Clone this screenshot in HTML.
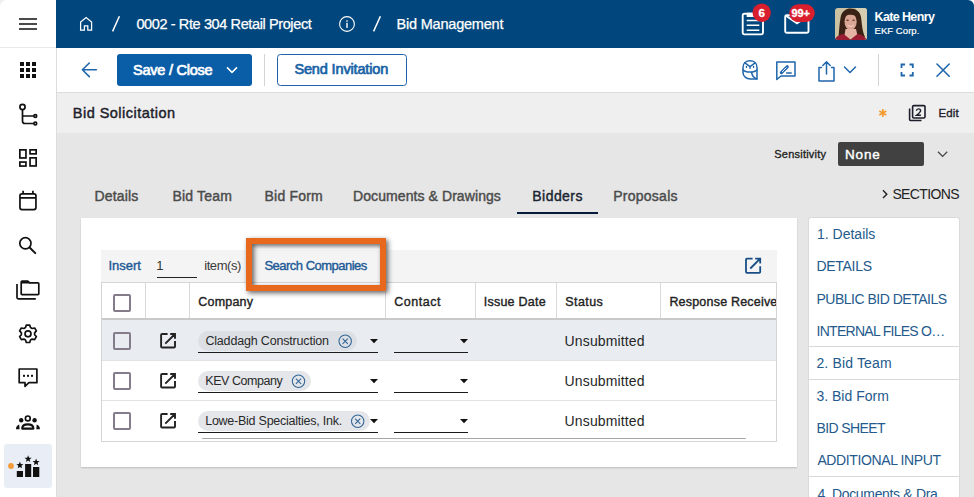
<!DOCTYPE html>
<html><head><meta charset="utf-8">
<style>
*{box-sizing:border-box;margin:0;padding:0}
html,body{width:974px;height:497px;overflow:hidden;background:#fff}
body{position:relative;font-family:"Liberation Sans",sans-serif;color:#222}
.a{position:absolute}
.t{position:absolute;white-space:nowrap;line-height:1}
svg{position:absolute;left:0;top:0;overflow:visible}
</style></head><body>
<!-- base panels -->
<div class="a" style="left:0;top:0;width:10px;height:10px;background:#efefef"></div>
<div class="a" style="left:0;top:0;width:56px;height:497px;background:#fff;border-top-left-radius:7px"></div>
<div class="a" style="left:56px;top:48px;width:1px;height:449px;background:#dcdcdc"></div>
<div class="a" style="left:0;top:47px;width:56px;height:1px;background:#e8e8e8"></div>
<div class="a" style="left:56px;top:0;width:918px;height:48px;background:#01467c;border-top-right-radius:6px"></div>
<div class="a" style="left:57px;top:48px;width:917px;height:44px;background:#fff"></div>
<div class="a" style="left:57px;top:92px;width:917px;height:1px;background:#dcdcdc"></div>
<div class="a" style="left:57px;top:93px;width:917px;height:40px;background:#efefef"></div>
<div class="a" style="left:57px;top:133px;width:917px;height:364px;background:#e6e6e6"></div>

<!-- hamburger -->
<div class="a" style="left:19px;top:18px;width:18px;height:2px;background:#4a4a4a"></div>
<div class="a" style="left:19px;top:23px;width:18px;height:2px;background:#4a4a4a"></div>
<div class="a" style="left:19px;top:28px;width:18px;height:2px;background:#4a4a4a"></div>

<!-- sidebar icons -->
<svg width="974" height="497" viewBox="0 0 974 497">
 <g fill="#111">
  <rect x="20" y="62" width="4" height="4"/><rect x="26" y="62" width="4" height="4"/><rect x="32" y="62" width="4" height="4"/>
  <rect x="20" y="68" width="4" height="4"/><rect x="26" y="68" width="4" height="4"/><rect x="32" y="68" width="4" height="4"/>
  <rect x="20" y="74" width="4" height="4"/><rect x="26" y="74" width="4" height="4"/><rect x="32" y="74" width="4" height="4"/>
 </g>
 <g fill="none" stroke="#111" stroke-width="1.7">
  <!-- flow -->
  <circle cx="22.5" cy="107" r="2.6"/>
  <path d="M22.5 109.6 V121 Q22.5 123.5 25 123.5 H33.8 M22.5 116 H33.8"/>
  <circle cx="35.3" cy="116" r="1.4"/>
  <circle cx="35.3" cy="123.5" r="1.4"/>
  <!-- dashboard -->
  <rect x="19.85" y="149.85" width="6.1" height="8.1"/>
  <rect x="30.05" y="149.85" width="6.1" height="4"/>
  <rect x="19.85" y="162.05" width="6.1" height="4"/>
  <rect x="30.05" y="157.85" width="6.1" height="8.1"/>
  <!-- calendar -->
  <rect x="19.95" y="193.85" width="16" height="15.7" rx="2"/>
  <path d="M20 197.9 H36 M23.1 190.8 V193.5 M32.9 190.8 V193.5"/>
  <!-- search -->
  <circle cx="25.4" cy="243.3" r="5.6"/>
  <path d="M29.6 247.5 L35.3 253.1" stroke-width="2" stroke-linecap="round"/>
  <!-- folders -->
  <path d="M17 284 V297.5 Q17 298.8 18.3 298.8 H35.8"/>
  <path d="M21.2 293.8 V281.9 Q21.2 281 22.1 281 H27.8 L29.6 282.9 H37.9 Q38.8 282.9 38.8 283.8 V293.8 Q38.8 294.7 37.9 294.7 H22.1 Q21.2 294.7 21.2 293.8 Z" stroke-linejoin="round"/>
  <!-- chat -->
  <path d="M19.2 369 H36.9 V382.7 H28.9 L25 386.3 V382.7 H19.2 Z" stroke-linejoin="round"/>
 </g>
 <path d="M21 281 H27.8 L29.8 283.6 H21 Z" fill="#111"/>
 <g fill="#111"><rect x="23" y="374.8" width="2" height="2"/><rect x="27" y="374.8" width="2" height="2"/><rect x="31" y="374.8" width="2" height="2"/></g>
 <!-- gear -->
 <path fill="none" stroke="#111" stroke-width="1.7" stroke-linejoin="round" d="M30.51 327.59 L29.69 325.11 L26.31 325.11 L25.49 327.59 L23.88 328.52 L21.32 327.99 L19.63 330.92 L21.37 332.87 L21.37 334.73 L19.63 336.68 L21.32 339.61 L23.88 339.08 L25.49 340.01 L26.31 342.49 L29.69 342.49 L30.51 340.01 L32.12 339.08 L34.68 339.61 L36.37 336.68 L34.63 334.73 L34.63 332.87 L36.37 330.92 L34.68 327.99 L32.12 328.52 Z"/>
 <circle cx="28" cy="333.8" r="3" fill="none" stroke="#111" stroke-width="1.7"/>
 <!-- people -->
 <circle cx="27.8" cy="418.4" r="2.4" fill="none" stroke="#111" stroke-width="1.7"/>
 <circle cx="21.2" cy="420.2" r="2.2" fill="#111"/>
 <circle cx="34.6" cy="420.2" r="2.2" fill="#111"/>
 <path d="M22.2 428.6 Q22.2 424.4 27.8 424.4 Q33.4 424.4 33.4 428.6 Z" fill="none" stroke="#111" stroke-width="2.1" stroke-linejoin="round"/>
 <path d="M16 429.2 Q16 425.5 19.2 424.5 L19.6 429.2 Z" fill="#111"/>
 <path d="M39.9 429.2 Q39.9 425.5 36.7 424.5 L36.3 429.2 Z" fill="#111"/>
 <!-- active item -->
 <rect x="4" y="444" width="48" height="44" rx="3" fill="#e9eef6"/>
 <circle cx="11" cy="466" r="2.9" fill="#f39a3a"/>
 <g fill="#111">
  <rect x="16.8" y="471" width="6.2" height="6"/>
  <rect x="25.1" y="464" width="6.1" height="13"/>
  <rect x="33" y="467" width="6.3" height="10"/>
  <path d="M19.90 461.60 L20.84 464.01 L23.42 464.16 L21.42 465.79 L22.07 468.29 L19.90 466.90 L17.73 468.29 L18.38 465.79 L16.38 464.16 L18.96 464.01 Z"/>
  <path d="M28.10 455.30 L29.04 457.71 L31.62 457.86 L29.62 459.49 L30.27 461.99 L28.10 460.60 L25.93 461.99 L26.58 459.49 L24.58 457.86 L27.16 457.71 Z"/>
  <path d="M36.10 458.50 L37.04 460.91 L39.62 461.06 L37.62 462.69 L38.27 465.19 L36.10 463.80 L33.93 465.19 L34.58 462.69 L32.58 461.06 L35.16 460.91 Z"/>
 </g>
</svg>

<!-- header -->
<svg width="974" height="497">
 <path d="M80.6 30.2 V22 L86.1 17.6 L91.6 22 V30.2 H87.8 V25.8 H84.4 V30.2 Z" fill="none" stroke="#fff" stroke-width="1.25" stroke-linejoin="miter"/>
 <path d="M119.4 16.2 L112.6 31.4" stroke="#fff" stroke-width="1.5"/>
 <circle cx="347" cy="24" r="7.4" fill="none" stroke="#fff" stroke-width="1.1"/>
 <rect x="346.1" y="20.3" width="1.8" height="1.4" fill="#c9d6e2"/>
 <rect x="346.1" y="22.8" width="1.8" height="5.1" fill="#c9d6e2"/>
 <path d="M380.4 16.2 L373.6 31.4" stroke="#fff" stroke-width="1.5"/>
 <!-- clipboard -->
 <rect x="742.7" y="13.7" width="20.3" height="20.7" rx="1.8" fill="none" stroke="#fff" stroke-width="1.9"/>
 <path d="M746.7 12.7 H759.3 V17 H746.7 Z" fill="#fff"/>
 <path d="M746.7 20.4 H759.3 M746.7 25.3 H759.3 M746.7 30.3 H759.3" stroke="#fff" stroke-width="1.5"/>
 <circle cx="761.7" cy="12.8" r="9.2" fill="#d91e2e"/>
 <!-- envelope -->
 <rect x="785.2" y="15.2" width="23.3" height="17.6" rx="1.5" fill="none" stroke="#fff" stroke-width="1.9"/>
 <path d="M786 15.8 L797 23.3 L808 15.8" fill="none" stroke="#fff" stroke-width="1.9"/>
 <rect x="789.2" y="4.3" width="25.6" height="17.6" rx="8.8" fill="#d91e2e"/>
 <!-- avatar -->
 <defs><clipPath id="av"><rect x="835" y="8" width="32" height="32" rx="3"/></clipPath></defs>
 <filter id="bl" x="-20%" y="-20%" width="140%" height="140%"><feGaussianBlur stdDeviation="0.55"/></filter>
 <g clip-path="url(#av)">
  <rect x="835" y="8" width="32" height="32" fill="#cbc2a2"/>
  <rect x="856" y="8" width="11" height="32" fill="#d6ceb0"/>
  <g filter="url(#bl)">
  <path d="M838.5 38 C839 31 839.5 24 840.5 18 C841.5 11 846 8.5 850.5 8.5 C856 8.5 860 11.5 861 17 C862 24 862 30 865 37 L858 38 Z" fill="#3a2417"/>
  <ellipse cx="850.6" cy="21.8" rx="6.1" ry="8.4" fill="#dba593"/>
  <path d="M843.8 16.5 C845 11.5 849 10.8 852 11.2 C855.5 11.8 857.5 14 857.8 18 C855.5 15 850 13.5 843.8 16.5 Z" fill="#3a2417"/>
  <ellipse cx="847.6" cy="20.3" rx="1.3" ry="0.8" fill="#5a3a30"/>
  <ellipse cx="853.6" cy="20.3" rx="1.3" ry="0.8" fill="#5a3a30"/>
  <path d="M847.5 25.4 Q850.6 27.6 853.7 25.4" fill="none" stroke="#f2d8d0" stroke-width="1"/>
  <path d="M845.5 29 L856 29 L858 38 L844 38 Z" fill="#e4b3a3"/>
  <path d="M834 42 C835 37 839 34.5 843.5 34 L850.5 39.5 L857.5 34 C862 34.5 866 37 868 42 Z" fill="#9a1d30"/>
  </g>
 </g>
</svg>
<div class="t" style="left:136.40px;top:17.00px;font-size:14.5px;color:#fff;letter-spacing:-0.386px;-webkit-text-stroke:0.25px #fff;">0002 - Rte 304 Retail Project</div>
<div class="t" style="left:396.60px;top:17.00px;font-size:14.5px;color:#fff;letter-spacing:-0.215px;-webkit-text-stroke:0.25px #fff;">Bid Management</div>
<div class="t" style="left:874.50px;top:11.00px;font-size:12.5px;color:#fff;font-weight:bold;letter-spacing:-0.622px;">Kate Henry</div>
<div class="t" style="left:874.50px;top:26.00px;font-size:9.5px;color:#fff;letter-spacing:0.062px;-webkit-text-stroke:0.2px #fff;">EKF Corp.</div>
<div class="t" style="left:757.2px;top:8.4px;width:9px;text-align:center;font-size:11.5px;font-weight:bold;color:#fff;-webkit-text-stroke:0.3px #fff">6</div>
<div class="t" style="left:791.6px;top:8.2px;font-size:11px;font-weight:bold;color:#fff;letter-spacing:-0.2px;-webkit-text-stroke:0.3px #fff">99+</div>

<!-- toolbar -->
<div class="a" style="left:117px;top:54px;width:135px;height:32px;background:#0a5ea8;border-radius:3px"></div>
<div class="a" style="left:264px;top:54px;width:1px;height:32px;background:#d4d4d4"></div>
<div class="a" style="left:277px;top:54px;width:130px;height:32px;border:1.5px solid #1f64a8;border-radius:3.5px"></div>
<div class="a" style="left:878px;top:54px;width:1px;height:32px;background:#d4d4d4"></div>
<svg width="974" height="497">
 <g fill="none" stroke="#1f66ad" stroke-width="1.6" stroke-linecap="round" stroke-linejoin="round">
  <path d="M96.4 69.8 H82.4 M89.3 63 L82.4 69.8 L89.3 76.6"/>
 </g>
 <path d="M227 67.4 L232 72.4 L237 67.4" fill="none" stroke="#fff" stroke-width="1.5"/>
 <g fill="none" stroke="#1f66ad" stroke-width="1.5" stroke-linejoin="round" stroke-linecap="round">
  <!-- owl -->
  <path d="M743 71 V67.5 C743 63.2 746 60.8 750 60.8 C754 60.8 757 63.2 757 67.5 V78.9 H750.5 C746.2 78.9 743 76.3 743 72.5 Z"/>
  <path d="M744.9 62.9 L750 66.6 L755.1 62.9 M750 66.6 V68.2"/>
  <path d="M743.2 70 C745.5 72.8 754.5 72.8 756.8 70"/>
  <path d="M751.6 72.4 C752 75.5 753.8 77.8 756.8 78.9"/>
 </g>
 <g fill="#1f66ad"><rect x="745.8" y="65.9" width="1.3" height="2.1"/><rect x="752.9" y="65.9" width="1.3" height="2.1"/></g>
 <g fill="none" stroke="#1f66ad" stroke-width="1.5" stroke-linejoin="round" stroke-linecap="round">
  <!-- sign chat -->
  <path d="M776.8 62 H795 V76 H781 L776.8 79.5 Z"/>
  <path d="M781.4 72.6 L787.2 66.8" stroke-width="3.2" stroke-linecap="round"/>
  <path d="M782.3 71.7 L786.3 67.7" stroke="#fff" stroke-width="1" stroke-linecap="round"/>
  <path d="M786.6 72.9 H791.2" stroke-width="1.5"/>
  <!-- share -->
  <path d="M821.5 67.5 H819 V81 H834 V67.5 H831.5 M826.5 74 V62 M822.8 65.5 L826.5 61.8 L830.2 65.5"/>
  <path d="M844.5 67 L850 72.5 L855.5 67"/>
  <!-- expand -->
  <path d="M901.5 68 V64.5 H905 M909.5 64.5 H912.8 V68 M912.8 72 V75.5 H909.5 M905 75.5 H901.5 V72" stroke-width="1.8" stroke-linecap="butt" stroke-linejoin="miter"/>
  <!-- close -->
  <path d="M937 64 L949.2 76.2 M949.2 64 L937 76.2" stroke-width="1.6"/>
 </g>
</svg>
<div class="t" style="left:133.00px;top:63.00px;font-size:14.5px;color:#fff;-webkit-text-stroke:0.7px #fff;letter-spacing:-0.236px;">Save / Close</div>
<div class="t" style="left:294.40px;top:62.00px;font-size:14.5px;color:#1a63a6;-webkit-text-stroke:0.7px #1a63a6;letter-spacing:-0.143px;">Send Invitation</div>

<!-- title bar -->
<div class="t" style="left:72.80px;top:106.00px;font-size:14.5px;color:#1d1d2b;-webkit-text-stroke:0.435px #1d1d2b;letter-spacing:0.473px;">Bid Solicitation</div>
<svg width="974" height="497">
 <path d="M882.8 109 V117 M879.3 111 L886.3 115 M886.3 111 L879.3 115" stroke="#f29a2b" stroke-width="1.6"/>
 <rect x="912.6" y="105.6" width="12.4" height="12.4" rx="1.2" fill="none" stroke="#1d1d2b" stroke-width="1.6"/>
 <path d="M909.6 108.5 V119.5 Q909.6 120.5 910.6 120.5 H921.5" fill="none" stroke="#1d1d2b" stroke-width="1.6"/>
 <path d="M916.4 110.8 Q916.6 108.9 918.6 108.9 Q920.6 108.9 920.6 110.7 Q920.6 112 916.5 115.3 H920.9" fill="none" stroke="#1d1d2b" stroke-width="1.4"/>
</svg>
<div class="t" style="left:938.60px;top:108.00px;font-size:11.5px;color:#1d1d2b;-webkit-text-stroke:0.345px #1d1d2b;letter-spacing:0.067px;">Edit</div>

<!-- sensitivity -->
<div class="t" style="left:774.30px;top:149.00px;font-size:11px;color:#222;-webkit-text-stroke:0.330px #222;letter-spacing:0.220px;">Sensitivity</div>
<div class="a" style="left:838px;top:142px;width:86px;height:24px;background:#414141;border-radius:2px"></div>
<div class="t" style="left:845.00px;top:148.00px;font-size:13.5px;color:#fff;-webkit-text-stroke:0.405px #fff;letter-spacing:0.867px;">None</div>
<svg width="974" height="497">
 <path d="M938 151.8 L942.6 156.4 L947.2 151.8" fill="none" stroke="#444" stroke-width="1.3"/>
</svg>

<!-- tabs -->
<div class="t" style="left:94.50px;top:189.00px;font-size:14px;color:#4b4b4b;-webkit-text-stroke:0.420px #4b4b4b;letter-spacing:0.150px;">Details</div>
<div class="t" style="left:172.40px;top:189.00px;font-size:14px;color:#4b4b4b;-webkit-text-stroke:0.420px #4b4b4b;letter-spacing:0.200px;">Bid Team</div>
<div class="t" style="left:264.50px;top:189.00px;font-size:14px;color:#4b4b4b;-webkit-text-stroke:0.420px #4b4b4b;letter-spacing:0.214px;">Bid Form</div>
<div class="t" style="left:353.00px;top:189.00px;font-size:14px;color:#4b4b4b;-webkit-text-stroke:0.420px #4b4b4b;letter-spacing:0.084px;">Documents &amp; Drawings</div>
<div class="t" style="left:532.30px;top:189.00px;font-size:14px;color:#1b2433;-webkit-text-stroke:0.420px #1b2433;letter-spacing:0.450px;">Bidders</div>
<div class="a" style="left:517px;top:211.8px;width:81px;height:2.3px;background:#061b3b"></div>
<div class="t" style="left:613.20px;top:189.00px;font-size:14px;color:#4b4b4b;-webkit-text-stroke:0.420px #4b4b4b;letter-spacing:0.262px;">Proposals</div>
<svg width="974" height="497">
 <path d="M883 190.3 L886.8 194.2 L883 198" fill="none" stroke="#222" stroke-width="1.4"/>
</svg>
<div class="t" style="left:892.40px;top:187.00px;font-size:14px;color:#222;letter-spacing:-0.614px;">SECTIONS</div>

<!-- card -->
<div class="a" style="left:81px;top:218px;width:716px;height:249px;background:#fff;box-shadow:0 1px 1.5px rgba(0,0,0,.18)"></div>
<!-- grid -->
<div class="a" style="left:101px;top:250px;width:676px;height:32px;background:#f4f4f4"></div>
<div class="a" style="left:101px;top:282px;width:676px;height:160px;border:1px solid #d5d5d5;background:#fff"></div>
<div class="a" style="left:102px;top:318px;width:674px;height:2px;background:#c9c9c9"></div>
<div class="a" style="left:102px;top:320px;width:674px;height:40px;background:#e9edf2"></div>
<div class="a" style="left:102px;top:360px;width:674px;height:1px;background:#e3e3e3"></div>
<div class="a" style="left:102px;top:400px;width:674px;height:1px;background:#e3e3e3"></div>
<div class="a" style="left:145px;top:283px;width:1px;height:35px;background:#d9d9d9"></div>
<div class="a" style="left:189px;top:283px;width:1px;height:35px;background:#d9d9d9"></div>
<div class="a" style="left:385px;top:283px;width:1px;height:35px;background:#d9d9d9"></div>
<div class="a" style="left:475px;top:283px;width:1px;height:35px;background:#d9d9d9"></div>
<div class="a" style="left:556px;top:283px;width:1px;height:35px;background:#d9d9d9"></div>
<div class="a" style="left:660px;top:283px;width:1px;height:35px;background:#d9d9d9"></div>
<div class="a" style="left:202px;top:437.6px;width:544px;height:1.7px;background:#a6a6a6;border-radius:1px"></div>

<div class="t" style="left:108.50px;top:259.00px;font-size:13px;color:#1d5a97;-webkit-text-stroke:0.390px #1d5a97;letter-spacing:-0.040px;">Insert</div>
<div class="t" style="left:156.30px;top:259.00px;font-size:13px;color:#333;">1</div>
<div class="a" style="left:157px;top:276.5px;width:40px;height:1.5px;background:#222"></div>
<div class="t" style="left:204.20px;top:259.00px;font-size:13px;color:#3a3a3a;letter-spacing:-0.417px;">item(s)</div>
<div class="t" style="left:264.40px;top:259.00px;font-size:13px;color:#1d5a97;-webkit-text-stroke:0.390px #1d5a97;letter-spacing:-0.507px;">Search Companies</div>
<svg width="974" height="497">
 <g fill="none" stroke="#174e86" stroke-width="1.8">
  <path d="M752.6 258.6 H747 Q746 258.6 746 259.6 V271.8 Q746 272.8 747 272.8 H759.2 Q760.2 272.8 760.2 271.8 V266.2 M755.2 258.6 H760.2 V263.6 M760.2 258.6 L750.3 268.5"/>
 </g>
</svg>

<!-- header row -->
<div class="a" style="left:113px;top:294px;width:18px;height:18px;border:2px solid #847c8b;border-radius:2px"></div>
<div class="t" style="left:198.30px;top:296.00px;font-size:12.5px;color:#222;-webkit-text-stroke:0.375px #222;letter-spacing:0.200px;">Company</div>
<div class="t" style="left:394.30px;top:296.00px;font-size:12.5px;color:#222;-webkit-text-stroke:0.375px #222;letter-spacing:0.517px;">Contact</div>
<div class="t" style="left:483.70px;top:296.00px;font-size:12.5px;color:#222;-webkit-text-stroke:0.375px #222;letter-spacing:0.244px;">Issue Date</div>
<div class="t" style="left:565.30px;top:296.00px;font-size:12.5px;color:#222;-webkit-text-stroke:0.375px #222;letter-spacing:0.400px;">Status</div>
<div class="a" style="left:661px;top:283px;width:115px;height:35px;overflow:hidden"><div class="t" style="left:8.4px;top:12.5px;font-size:12.5px;color:#222;-webkit-text-stroke:0.375px #222;letter-spacing:0.2px">Response Received</div></div>

<!-- rows -->
<div class="a" style="left:113px;top:332px;width:18px;height:18px;border:2px solid #847c8b;border-radius:2px"></div>
<div class="a" style="left:113px;top:372px;width:18px;height:18px;border:2px solid #847c8b;border-radius:2px"></div>
<div class="a" style="left:113px;top:412px;width:18px;height:18px;border:2px solid #847c8b;border-radius:2px"></div>
<div class="a" style="left:198px;top:331.2px;width:159px;height:19.4px;border-radius:10px;background:#dce0e5"></div>
<div class="a" style="left:198px;top:371.2px;width:113px;height:19.4px;border-radius:10px;background:#e4e6e9"></div>
<div class="a" style="left:198px;top:411.2px;width:171.5px;height:19.4px;border-radius:10px;background:#e4e6e9"></div>
<svg width="974" height="497">
 <g fill="none" stroke="#222" stroke-width="1.9">
  <path transform="translate(0 0)" d="M167.6 334 H162.2 Q161.1 334 161.1 335.1 V346.4 Q161.1 347.5 162.2 347.5 H173.9 Q175 347.5 175 346.4 V341.1 M170.2 334 H175 V338.7 M175 334 L165.3 343.7"/>
  <path transform="translate(0 40)" d="M167.6 334 H162.2 Q161.1 334 161.1 335.1 V346.4 Q161.1 347.5 162.2 347.5 H173.9 Q175 347.5 175 346.4 V341.1 M170.2 334 H175 V338.7 M175 334 L165.3 343.7"/>
  <path transform="translate(0 80)" d="M167.6 334 H162.2 Q161.1 334 161.1 335.1 V346.4 Q161.1 347.5 162.2 347.5 H173.9 Q175 347.5 175 346.4 V341.1 M170.2 334 H175 V338.7 M175 334 L165.3 343.7"/>
 </g>
 <g fill="none" stroke="#2f6597" stroke-width="1.05">
  <circle cx="345.2" cy="341.2" r="6.2"/><path d="M342.6 338.6 L347.8 343.8 M347.8 338.6 L342.6 343.8"/>
  <circle cx="298.5" cy="381.2" r="6.2"/><path d="M295.9 378.6 L301.1 383.8 M301.1 378.6 L295.9 383.8"/>
  <circle cx="357.7" cy="421.2" r="6.2"/><path d="M355.1 418.6 L360.3 423.8 M360.3 418.6 L355.1 423.8"/>
 </g>
 <g fill="#111">
  <path d="M370 339 H378 L374 343.3 Z"/>
  <path d="M370 379 H378 L374 383.3 Z"/>
  <path d="M370 419 H378 L374 423.3 Z"/>
  <path d="M460 339 H468 L464 343.3 Z"/>
  <path d="M460 379 H468 L464 383.3 Z"/>
  <path d="M460 419 H468 L464 423.3 Z"/>
 </g>
</svg>
<div class="a" style="left:198px;top:351.8px;width:180px;height:1.5px;background:#1a1a1a"></div>
<div class="a" style="left:198px;top:391.8px;width:180px;height:1.5px;background:#1a1a1a"></div>
<div class="a" style="left:198px;top:431.8px;width:180px;height:1.5px;background:#1a1a1a"></div>
<div class="a" style="left:394px;top:351.8px;width:74px;height:1.5px;background:#1a1a1a"></div>
<div class="a" style="left:394px;top:391.8px;width:74px;height:1.5px;background:#1a1a1a"></div>
<div class="a" style="left:394px;top:431.8px;width:74px;height:1.5px;background:#1a1a1a"></div>
<div class="t" style="left:205.40px;top:335.00px;font-size:12.5px;color:#292929;letter-spacing:-0.175px;">Claddagh Construction</div>
<div class="t" style="left:205.30px;top:375.00px;font-size:12.5px;color:#292929;letter-spacing:-0.460px;">KEV Company</div>
<div class="t" style="left:205.20px;top:415.00px;font-size:12.5px;color:#292929;letter-spacing:-0.248px;">Lowe-Bid Specialties, Ink.</div>
<div class="t" style="left:564.60px;top:334.00px;font-size:14px;color:#262626;letter-spacing:0.140px;">Unsubmitted</div>
<div class="t" style="left:564.60px;top:374.00px;font-size:14px;color:#262626;letter-spacing:0.140px;">Unsubmitted</div>
<div class="t" style="left:564.60px;top:414.00px;font-size:14px;color:#262626;letter-spacing:0.140px;">Unsubmitted</div>

<!-- orange highlight -->
<div class="a" style="left:246px;top:238px;width:140px;height:53px;border:6px solid #e8691e;box-shadow:2px 2px 5px rgba(0,0,0,.62), inset 2px 2px 5px rgba(0,0,0,.62)"></div>

<!-- sections panel -->
<div class="a" style="left:809px;top:218px;width:150px;height:300px;background:#fff;box-shadow:0 0 0 1px #dadada;border-radius:2px"></div>
<div class="a" style="left:809px;top:346px;width:150px;height:1px;background:#d8d8d8"></div>
<div class="a" style="left:809px;top:379px;width:150px;height:1px;background:#d8d8d8"></div>
<div class="a" style="left:809px;top:476px;width:150px;height:1px;background:#d8d8d8"></div>
<div class="t" style="left:817.00px;top:227.00px;font-size:14px;color:#245a8c;">1. Details</div>
<div class="t" style="left:816.50px;top:259.00px;font-size:14px;color:#245a8c;letter-spacing:-0.300px;">DETAILS</div>
<div class="t" style="left:816.50px;top:292.00px;font-size:14px;color:#245a8c;letter-spacing:-0.500px;">PUBLIC BID DETAILS</div>
<div class="t" style="left:816.50px;top:324.00px;font-size:14px;color:#245a8c;letter-spacing:-0.719px;">INTERNAL FILES O…</div>
<div class="t" style="left:816.40px;top:356.00px;font-size:14px;color:#245a8c;letter-spacing:0.160px;">2. Bid Team</div>
<div class="t" style="left:816.40px;top:389.00px;font-size:14px;color:#245a8c;letter-spacing:0.010px;">3. Bid Form</div>
<div class="t" style="left:816.40px;top:421.00px;font-size:14px;color:#245a8c;letter-spacing:-0.600px;">BID SHEET</div>
<div class="t" style="left:817.40px;top:453.00px;font-size:14px;color:#245a8c;letter-spacing:-0.387px;">ADDITIONAL INPUT</div>
<div class="t" style="left:817.40px;top:487.00px;font-size:14px;color:#245a8c;letter-spacing:-0.333px;">4. Documents &amp; Dra…</div>
</body></html>
